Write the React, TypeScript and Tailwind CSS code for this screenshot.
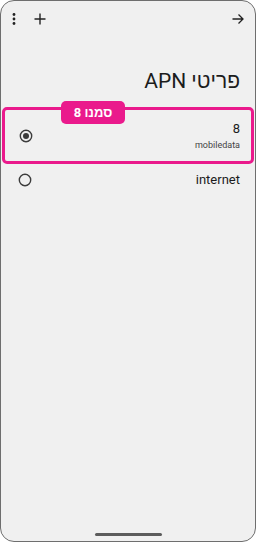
import React from "react";

const font = { fontFamily: 'Roboto, "Liberation Sans", "DejaVu Sans", sans-serif' };

function Radio({ checked }: { checked: boolean }) {
  return (
    <svg width="14" height="14" viewBox="0 0 14 14">
      <circle cx="7" cy="7" r="5.7" fill="none" stroke="#3c3c3c" strokeWidth="1.4" />
      {checked && <circle cx="7" cy="7" r="3" fill="#3c3c3c" />}
    </svg>
  );
}

export default function App() {
  return (
    <div className="w-[256px] h-[542px] bg-white" style={font}>
      <div className="relative w-full h-full rounded-[14px] border border-[#6e6e6e] bg-[#f0f0f0] overflow-hidden flex flex-col">
        <div className="flex items-center h-[36px] pl-[9px] pr-[11px] text-[#222]">
          <svg width="8" height="12" viewBox="0 0 8 12" className="mr-[16px]">
            <circle cx="4" cy="1.5" r="1.4" fill="#222" />
            <circle cx="4" cy="6" r="1.4" fill="#222" />
            <circle cx="4" cy="10.5" r="1.4" fill="#222" />
          </svg>
          <svg width="12" height="12" viewBox="0 0 12 12">
            <path d="M6 0.5V11.5M0.5 6H11.5" stroke="#222" strokeWidth="1.4" />
          </svg>
          <div className="flex-1" />
          <svg width="12" height="12" viewBox="0 0 12 12">
            <path d="M0.5 6H11M6.5 1.5L11 6L6.5 10.5" stroke="#222" strokeWidth="1.3" fill="none" />
          </svg>
        </div>
        <div dir="rtl" className="pr-[15px] pt-[31px] text-[21px] leading-[26px] text-[#1c1c1c]">
          פריטי APN
        </div>
        <div className="relative mt-[13px] mx-[1px] h-[57px] rounded-[5px] border-[3px] border-[#ea1a8c] flex items-center justify-between pl-[14px] pr-[11px]">
          <Radio checked />
          <div className="flex flex-col items-end text-[#1c1c1c]">
            <div className="text-[13px] leading-[15px]">8</div>
            <div className="text-[9px] leading-[12px] mt-[3px] text-[#444]">mobiledata</div>
          </div>
          <div dir="rtl" className="absolute left-[56px] top-[-9px] w-[64px] h-[23px] rounded-[5px] bg-[#ea1a8c] text-white font-bold text-[13px] flex items-center justify-center">
            סמנו 8
          </div>
        </div>
        <div className="flex items-center justify-between h-[32px] pl-[17px] pr-[15px]">
          <Radio checked={false} />
          <div className="text-[13px] text-[#1c1c1c]">internet</div>
        </div>
        <div className="flex-1" />
        <div className="flex justify-center pb-[5px]">
          <div className="w-[67px] h-[3px] rounded-full bg-[#5c5c5c]" />
        </div>
      </div>
    </div>
  );
}
